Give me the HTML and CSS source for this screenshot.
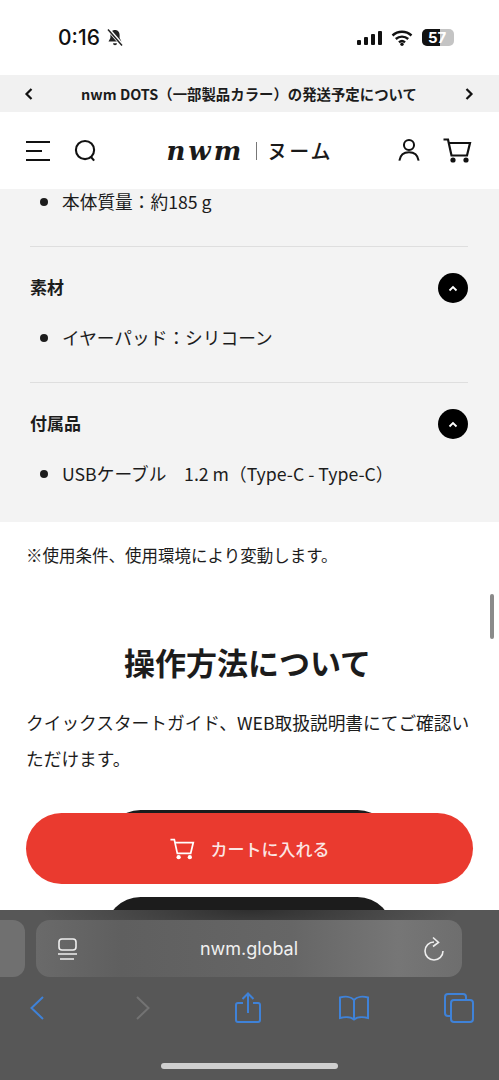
FILE: index.html
```html
<!DOCTYPE html>
<html lang="ja">
<head>
    <meta charset="UTF-8">
    <meta name="viewport" content="width=device-width, initial-scale=1.0">
    <title>nwm DOTS</title>
    <link rel="stylesheet" href="styles.css">
</head>
<body>
    <div class="status-bar">
        <div class="status-left">
            <span class="status-time">0:16</span>
            <svg class="bell" width="18" height="19" viewBox="0 0 18 19">
                <path d="M9 2c-3 0-4.600 2.300-4.600 5v3L2.500 13.500h13L13.600 10V7C13.600 4.300 12 2 9 2z" fill="#222"/>
                <path d="M7 15.200h4a2 2 0 0 1-4 0z" fill="#222"/>
                <path d="M2.500 1.500l13.500 15.500" stroke="#fff" stroke-width="3.500"/>
                <path d="M2 1.500l14 16" stroke="#222" stroke-width="1.500"/>
            </svg>
        </div>
        <div class="status-right">
            <svg width="25" height="16" viewBox="0 0 25 16">
                <rect x="0" y="10" width="4" height="5" rx="1" fill="#111"/>
                <rect x="7" y="7" width="4" height="8" rx="1" fill="#111"/>
                <rect x="14" y="4" width="4" height="11" rx="1" fill="#111"/>
                <rect x="21" y="1" width="4" height="14" rx="1" fill="#111"/>
            </svg>
            <svg width="22" height="16" viewBox="0 0 22 16">
                <path d="M1.500 5.500a14 14 0 0 1 19 0M4.800 9a9.200 9.200 0 0 1 12.400 0M8 12.300a4.500 4.500 0 0 1 6 0" fill="none" stroke="#111" stroke-width="2.400"/>
                <circle cx="11" cy="14.300" r="1.700" fill="#111"/>
            </svg>
            <div class="battery"><span class="battery-level"></span><span class="battery-text">57</span></div>
        </div>
    </div>

    <div class="promo-bar">
        <svg width="10" height="12" viewBox="0 0 10 12"><path d="M7.500 1L2.500 6l5 5" fill="none" stroke="#111" stroke-width="2.200"/></svg>
        <span class="promo-text">nwm DOTS（一部製品カラー）の発送予定について</span>
        <svg width="10" height="12" viewBox="0 0 10 12"><path d="M2.500 1l5 5-5 5" fill="none" stroke="#111" stroke-width="2.200"/></svg>
    </div>

    <div class="header">
        <div class="header-icons">
            <svg width="25" height="22" viewBox="0 0 25 22">
                <path d="M0 2h24M0 11h16M0 20h24" stroke="#111" stroke-width="2.200"/>
            </svg>
            <svg width="23" height="24" viewBox="0 0 24 24">
                <circle cx="11.500" cy="11" r="9.500" fill="none" stroke="#111" stroke-width="2.200"/>
                <path d="M17.500 18l3.500 4" stroke="#111" stroke-width="2.200"/>
            </svg>
        </div>
        <div class="logo">
            <span class="logo-mark">nwm</span>
            <span class="logo-line"></span>
            <span class="logo-kana">ヌーム</span>
        </div>
        <div class="header-icons">
            <svg width="22" height="25" viewBox="0 0 24 26">
                <circle cx="12" cy="7" r="5.500" fill="none" stroke="#111" stroke-width="2.200"/>
                <path d="M1.500 24c1-6 5-9 10.500-9s9.500 3 10.500 9" fill="none" stroke="#111" stroke-width="2.200"/>
            </svg>
            <svg width="29" height="25" viewBox="0 0 29 25">
                <path d="M0.500 1.500h4.500l3.500 16h15.500l3-12.500h-21" fill="none" stroke="#111" stroke-width="2.200"/>
                <circle cx="10" cy="22" r="2.600" fill="#111"/>
                <circle cx="23" cy="22" r="2.600" fill="#111"/>
            </svg>
        </div>
    </div>

    <div class="spec-panel">
        <ul class="spec-list first-list">
            <li>本体質量：約185 g</li>
        </ul>
        <div class="spec-section">
            <div class="spec-head">
                <h3>素材</h3>
                <span class="toggle"><svg width="10" height="7" viewBox="0 0 10 7"><path d="M1.500 5.500L5 2l3.500 3.500" fill="none" stroke="#fff" stroke-width="1.800"/></svg></span>
            </div>
            <ul class="spec-list">
                <li>イヤーパッド：シリコーン</li>
            </ul>
        </div>
        <div class="spec-section">
            <div class="spec-head">
                <h3>付属品</h3>
                <span class="toggle"><svg width="10" height="7" viewBox="0 0 10 7"><path d="M1.500 5.500L5 2l3.500 3.500" fill="none" stroke="#fff" stroke-width="1.800"/></svg></span>
            </div>
            <ul class="spec-list">
                <li>USBケーブル　1.2 m（Type-C - Type-C）</li>
            </ul>
        </div>
    </div>

    <div class="content">
        <p class="note">※使用条件、使用環境により変動します。</p>
        <h2>操作方法について</h2>
        <p class="guide">クイックスタートガイド、WEB取扱説明書にてご確認いただけます。</p>
        <div class="dark-button"></div>
        <div class="dark-button"></div>
    </div>

    <div class="scroll-thumb"></div>

    <button class="cart-button">
        <svg width="25" height="24" viewBox="0 0 29 25">
            <path d="M0.500 1.500h4.500l3.500 16h15.500l3-12.500h-21" fill="none" stroke="#fff" stroke-width="2"/>
            <circle cx="10" cy="22" r="2.500" fill="#fff"/>
            <circle cx="23" cy="22" r="2.500" fill="#fff"/>
        </svg>
        <span>カートに入れる</span>
    </button>

    <div class="browser-bar">
        <div class="address-row">
            <div class="prev-tab"></div>
            <div class="address">
                <svg width="22" height="24" viewBox="0 0 22 24">
                    <rect x="2" y="2" width="17" height="11" rx="3" fill="none" stroke="#eee" stroke-width="1.600"/>
                    <path d="M1 17h19M3 22h14" stroke="#eee" stroke-width="1.600"/>
                </svg>
                <span>nwm.global</span>
                <svg width="22" height="26" viewBox="0 0 22 26">
                    <path d="M11 6A9 9 0 1 0 20 15" fill="none" stroke="#eee" stroke-width="1.600"/>
                    <path d="M10 1.500l5.500 5-5.500 4" fill="none" stroke="#eee" stroke-width="1.600"/>
                </svg>
            </div>
        </div>
        <div class="toolbar">
            <span class="tool"><svg width="16" height="26" viewBox="0 0 16 26"><path d="M14 2L2.500 13 14 24" fill="none" stroke="#3f82d8" stroke-width="2"/></svg></span>
            <span class="tool"><svg width="16" height="26" viewBox="0 0 16 26"><path d="M2 2l11.500 11L2 24" fill="none" stroke="#737373" stroke-width="2"/></svg></span>
            <span class="tool"><svg width="26" height="32" viewBox="0 0 26 32">
                <path d="M8 11H3a2 2 0 0 0-2 2v15a2 2 0 0 0 2 2h20a2 2 0 0 0 2-2V13a2 2 0 0 0-2-2h-5M13 21V2M7.500 7L13 1.500 18.500 7" fill="none" stroke="#3f82d8" stroke-width="2"/>
            </svg></span>
            <span class="tool"><svg width="32" height="26" viewBox="0 0 32 26">
                <path d="M16 5C13 1.500 7 1 2 2.500V23c5-1.500 11-1 14 1.500 3-2.500 9-3 14-1.500V2.500C25 1 19 1.500 16 5zM16 5v19" fill="none" stroke="#3f82d8" stroke-width="2"/>
            </svg></span>
            <span class="tool"><svg width="30" height="30" viewBox="0 0 30 30">
                <path d="M7 23H4a3 3 0 0 1-3-3V4a3 3 0 0 1 3-3h15a3 3 0 0 1 3 3v3" fill="none" stroke="#3f82d8" stroke-width="2"/>
                <rect x="7" y="7" width="22" height="22" rx="3" fill="none" stroke="#3f82d8" stroke-width="2"/>
            </svg></span>
        </div>
        <div class="home-bar"></div>
    </div>
</body>
</html>
```

FILE: styles.css
```css
body {
    margin: 0;
    width: 499px;
    height: 1080px;
    position: relative;
    overflow: hidden;
    background-color: white;
    color: #1c1c1c;
    font-family: "Noto Sans CJK JP", "Noto Sans", sans-serif;
}

.status-bar {
    height: 75px;
    padding: 0 45px 0 58px;
    display: flex;
    justify-content: space-between;
    align-items: center;
    box-sizing: border-box;
}

.status-left {
    display: flex;
    align-items: center;
    gap: 6px;
}

.status-time {
    font-family: Inter, sans-serif;
    font-size: 21px;
    font-weight: 500;
    color: #111;
}

.status-right {
    display: flex;
    align-items: center;
    gap: 9px;
}

.battery {
    width: 32px;
    height: 17px;
    border-radius: 5px;
    background-color: #c4c4c4;
    position: relative;
    overflow: hidden;
}

.battery-level {
    display: block;
    width: 18px;
    height: 100%;
    background-color: #111;
}

.battery-text {
    position: absolute;
    top: 0;
    left: 6px;
    font-family: Inter, sans-serif;
    font-size: 15px;
    font-weight: 700;
    line-height: 17px;
    color: white;
}

.promo-bar {
    height: 37px;
    padding: 0 25px 0 24px;
    background-color: #f1f1f1;
    display: flex;
    justify-content: space-between;
    align-items: center;
}

.promo-text {
    font-size: 14.400px;
    font-weight: 700;
    white-space: nowrap;
}

.header {
    height: 77px;
    padding: 0 27px 0 26px;
    display: flex;
    justify-content: space-between;
    align-items: center;
}

.header-icons {
    display: flex;
    align-items: center;
    gap: 23px;
}

.logo {
    margin-left: 4px;
    display: flex;
    align-items: center;
    color: #1a1a1a;
}

.logo-mark {
    font-family: "DejaVu Serif", serif;
    font-style: italic;
    font-weight: 700;
    font-size: 26px;
    line-height: 30px;
    letter-spacing: 3px;
}

.logo-line {
    width: 1px;
    height: 18px;
    margin: 0 10px 0 12px;
    background-color: #777;
}

.logo-kana {
    font-size: 20px;
    font-weight: 500;
    letter-spacing: 2px;
}

.spec-panel {
    display: flow-root;
    height: 333px;
    padding: 0 31px 0 30px;
    background-color: #f3f3f3;
    box-sizing: border-box;
}

.spec-list {
    margin: 0;
    padding: 0 0 0 32px;
    list-style: none;
    font-size: 17.700px;
    line-height: 26px;
}

.spec-list li::before {
    content: "";
    display: inline-block;
    width: 8px;
    height: 8px;
    margin: 0 14.500px 0 -22.500px;
    border-radius: 50%;
    background-color: #1c1c1c;
    vertical-align: 3px;
}

.first-list {
    margin-top: -1px;
    padding-bottom: 32px;
}

.spec-section {
    height: 136px;
    padding-top: 26px;
    border-top: 1px solid #dedede;
    box-sizing: border-box;
}

.spec-head {
    height: 30px;
    margin-bottom: 21px;
    display: flex;
    justify-content: space-between;
    align-items: center;
}

.spec-head h3 {
    margin: 0 0 3px;
    font-size: 17px;
    font-weight: 700;
}

.toggle {
    width: 30px;
    height: 30px;
    border-radius: 50%;
    background-color: black;
    display: flex;
    justify-content: center;
    align-items: center;
}

.content {
    padding: 0 27px 0 26px;
}

.note {
    margin: 20px 0 0;
    font-size: 16.500px;
    line-height: 26px;
}

h2 {
    margin: 71px 3px 0 0;
    font-size: 31px;
    font-weight: 700;
    line-height: 46px;
    text-align: center;
}

.guide {
    margin: 19px 0 0;
    font-size: 17.700px;
    line-height: 36px;
}

.dark-button {
    width: 288px;
    height: 71px;
    margin: 0 auto 16px;
    border-radius: 36px;
    background-color: #1c1c1c;
}

.guide + .dark-button {
    margin-top: 34px;
}

.scroll-thumb {
    position: absolute;
    top: 594px;
    left: 490px;
    width: 4px;
    height: 45px;
    border-radius: 2px;
    background-color: #8a8a8a;
}

.cart-button {
    position: absolute;
    top: 813px;
    left: 26px;
    width: 447px;
    height: 71px;
    border: none;
    border-radius: 36px;
    background-color: #ea3a2f;
    color: #fbe6e4;
    font-family: inherit;
    font-size: 17px;
    font-weight: 500;
    display: flex;
    justify-content: center;
    align-items: center;
    gap: 16px;
}

.browser-bar {
    position: absolute;
    top: 910px;
    left: 0;
    width: 499px;
    height: 170px;
    background: radial-gradient(ellipse 210px 34px at 250px 0, rgba(30, 30, 30, 0.7), rgba(30, 30, 30, 0)), #575757;
}

.address-row {
    height: 57px;
    padding-top: 10px;
    display: flex;
    gap: 11px;
}

.prev-tab {
    width: 25px;
    border-radius: 0 12px 12px 0;
    background-color: #707070;
}

.address {
    width: 426px;
    padding: 0 17px 0 21px;
    border-radius: 14px;
    background: linear-gradient(to right, #6a6a6a, #5f5f5f 20%, #666 60%, #767676 85%, #6e6e6e);
    color: #f0f0f0;
    font-family: Inter, sans-serif;
    font-size: 18px;
    display: flex;
    justify-content: space-between;
    align-items: center;
    box-sizing: border-box;
}

.address span {
    margin-right: 4px;
}

.toolbar {
    margin-top: 15px;
    padding: 0 24px 0 21px;
    display: flex;
    justify-content: space-between;
    align-items: center;
}

.tool {
    width: 32px;
    display: flex;
    justify-content: center;
}

.home-bar {
    position: absolute;
    top: 153px;
    left: 161px;
    width: 177px;
    height: 6px;
    border-radius: 3px;
    background-color: #cfcfcf;
}
```
